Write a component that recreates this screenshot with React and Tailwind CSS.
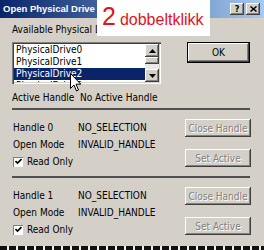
import React from 'react'

const raised =
  'bg-[#d4d0c8] shadow-[inset_-1px_-1px_0_#404040,inset_1px_1px_0_#ffffff,inset_-2px_-2px_0_#808080,inset_2px_2px_0_#d4d0c8]'

function CaptionButton({ children }) {
  return (
    <div className={`flex h-[12px] w-[14px] items-center justify-center ${raised}`}>{children}</div>
  )
}

function Arrow({ up }) {
  return (
    <svg width="7" height="4" viewBox="0 0 7 4">
      <path d={up ? 'M3.5 0 L7 4 L0 4 Z' : 'M0 0 L7 0 L3.5 4 Z'} fill="#000" />
    </svg>
  )
}

function ListBox() {
  const items = ['PhysicalDrive0', 'PhysicalDrive1', 'PhysicalDrive2', 'PhysicalDrive3']
  return (
    <div className="flex h-[42px] w-[149px] bg-white p-[2px] shadow-[inset_1px_1px_0_#808080,inset_2px_2px_0_#404040,inset_-1px_-1px_0_#ffffff,inset_-2px_-2px_0_#d4d0c8]">
      <div className="flex-1 overflow-hidden">
        {items.map((it, i) => (
          <div
            key={it}
            className={`h-[12px] pl-[2px] leading-[12px] ${i === 2 ? 'bg-[#0a246a] text-white' : ''}`}
          >
            {it}
          </div>
        ))}
      </div>
      <div className="flex w-[14px] flex-col">
        <div className={`flex h-[13px] items-center justify-center ${raised}`}>
          <Arrow up />
        </div>
        <div className={`h-[7px] ${raised}`} />
        <div className="flex-1 bg-[#ebe9e5]" />
        <div className={`flex h-[13px] items-center justify-center ${raised}`}>
          <Arrow />
        </div>
      </div>
    </div>
  )
}

function DisabledButton({ label }) {
  return (
    <div
      className={`flex h-[18px] w-[66px] items-center justify-center text-[#808080] [text-shadow:1px_1px_0_#ffffff] ${raised}`}
    >
      {label}
    </div>
  )
}

function CheckBox() {
  return (
    <div className="flex h-[10px] w-[10px] items-center justify-center bg-white shadow-[inset_1px_1px_0_#808080,inset_-1px_-1px_0_#ffffff]">
      <svg width="7" height="7" viewBox="0 0 7 7">
        <path d="M0.5 3 L2.5 5 L6.5 1" stroke="#000" strokeWidth="1.6" fill="none" />
      </svg>
    </div>
  )
}

function HandleSection({ n }) {
  return (
    <div className="flex pl-[13px] pt-[9px]">
      <div className="w-[172px]">
        <div className="flex h-[17px] items-center">
          <span className="w-[65px]">Handle {n}</span>
          <span>NO_SELECTION</span>
        </div>
        <div className="flex h-[17px] items-center">
          <span className="w-[65px]">Open Mode</span>
          <span>INVALID_HANDLE</span>
        </div>
        <div className="flex h-[17px] items-center gap-[4px]">
          <CheckBox />
          <span>Read Only</span>
        </div>
      </div>
      <div className="flex flex-col gap-[12px]">
        <DisabledButton label="Close Handle" />
        <DisabledButton label="Set Active" />
      </div>
    </div>
  )
}

function Separator() {
  return <div className="ml-[12px] h-[2px] w-[238px] bg-[#505050]" />
}

export default function App() {
  return (
    <div className="relative flex h-[250px] w-[264px] flex-col overflow-hidden bg-[#d4d0c8] font-['DejaVu_Sans_Condensed','Liberation_Sans',sans-serif] text-[10px] text-black">
      <div className="flex h-[18px] items-center justify-between bg-linear-to-r from-[#0a246a] to-[#a6caf0] pl-[3px] pr-[4px]">
        <span className="font-['Liberation_Sans',sans-serif] text-[9.5px] font-bold text-white">
          Open Physical Drive
        </span>
        <div className="flex gap-[2px]">
          <CaptionButton>
            <span className="text-[9px] font-bold leading-none">?</span>
          </CaptionButton>
          <CaptionButton>
            <svg width="7" height="6" viewBox="0 0 7 6">
              <path d="M0.5 0.5 L6.5 5.5 M6.5 0.5 L0.5 5.5" stroke="#000" strokeWidth="1.5" />
            </svg>
          </CaptionButton>
        </div>
      </div>

      <div className="ml-[12px] mt-[6px] h-[12px] leading-[12px]">Available Physical Drives:</div>

      <div className="mt-[6px] flex pl-[12px]">
        <ListBox />
        <div className="ml-[26px] flex h-[21px] w-[63px] items-center justify-center border border-black">
          <div className={`flex h-full w-full items-center justify-center ${raised}`}>OK</div>
        </div>
      </div>

      <div className="mt-[7px] flex h-[12px] items-center pl-[12px]">
        <span className="w-[68px]">Active Handle</span>
        <span>No Active Handle</span>
      </div>

      <div className="mt-[5px]">
        <Separator />
      </div>
      <HandleSection n={0} />
      <div className="mt-[6px]">
        <Separator />
      </div>
      <HandleSection n={1} />

      <div className="mt-auto h-[4px] bg-[repeating-linear-gradient(90deg,#111111_0_7px,#f0f0f0_7px_9px)]" />

      <div className="absolute left-[97px] top-0 flex h-[36px] w-[113px] items-baseline bg-white pl-[5px] pt-[3px] font-['Liberation_Sans',sans-serif] text-[#e0141e]">
        <span className="text-[25px] leading-[26px]">2</span>
        <span className="ml-[4px] text-[16px]">dobbeltklikk</span>
      </div>

      <svg className="absolute left-[70px] top-[73px]" width="12" height="19" viewBox="0 0 12 19">
        <path
          d="M0.5 0.5 L0.5 15.5 L4 12 L6.5 18 L8.5 17 L6 11.2 L10.8 11.2 Z"
          fill="#ffffff"
          stroke="#000000"
          strokeWidth="1"
        />
      </svg>
    </div>
  )
}
